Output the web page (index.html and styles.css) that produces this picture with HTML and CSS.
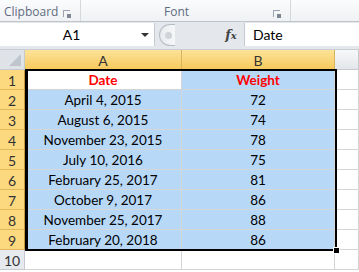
FILE: index.html
```html
<!DOCTYPE html>
<html lang="en">
<head>
    <meta charset="UTF-8">
    <title>Sheet</title>
    <link rel="stylesheet" href="styles.css">
</head>
<body>
    <div class="ribbon">
        <div class="group group-clip">
            <span class="group-label">Clipboard</span>
            <span class="launcher"></span>
        </div>
        <div class="group group-font">
            <span class="group-label">Font</span>
            <span class="launcher"></span>
        </div>
        <div class="group group-rest"></div>
    </div>

    <div class="formula-bar">
        <div class="name-box">
            <span class="name-text">A1</span>
            <span class="name-arrow"></span>
        </div>
        <div class="divider">
            <span class="grip"></span>
        </div>
        <div class="fx">f<span class="fx-x">x</span></div>
        <div class="formula-input">Date</div>
    </div>

    <div class="sheet">
        <div class="grid">
            <div class="corner"><span class="corner-tri"></span></div>
            <div class="col-head sel">A</div>
            <div class="col-head sel">B</div>
            <div class="col-head"></div>

            <div class="row-head sel">1</div>
            <div class="cell head-cell active">Date</div>
            <div class="cell head-cell hl">Weight</div>
            <div class="cell"></div>

            <div class="row-head sel">2</div>
            <div class="cell hl">April 4, 2015</div>
            <div class="cell hl">72</div>
            <div class="cell"></div>

            <div class="row-head sel">3</div>
            <div class="cell hl">August 6, 2015</div>
            <div class="cell hl">74</div>
            <div class="cell"></div>

            <div class="row-head sel">4</div>
            <div class="cell hl">November 23, 2015</div>
            <div class="cell hl">78</div>
            <div class="cell"></div>

            <div class="row-head sel">5</div>
            <div class="cell hl">July 10, 2016</div>
            <div class="cell hl">75</div>
            <div class="cell"></div>

            <div class="row-head sel">6</div>
            <div class="cell hl">February 25, 2017</div>
            <div class="cell hl">81</div>
            <div class="cell"></div>

            <div class="row-head sel">7</div>
            <div class="cell hl">October 9, 2017</div>
            <div class="cell hl">86</div>
            <div class="cell"></div>

            <div class="row-head sel">8</div>
            <div class="cell hl">November 25, 2017</div>
            <div class="cell hl">88</div>
            <div class="cell"></div>

            <div class="row-head sel">9</div>
            <div class="cell hl">February 20, 2018</div>
            <div class="cell hl">86</div>
            <div class="cell"></div>

            <div class="row-head">10</div>
            <div class="cell"></div>
            <div class="cell"></div>
            <div class="cell"></div>
        </div>
        <div class="selection">
            <span class="fill-handle"></span>
        </div>
    </div>
</body>
</html>
```

FILE: styles.css
```css
* {
    margin: 0;
    padding: 0;
    box-sizing: border-box;
}

body {
    width: 359px;
    height: 272px;
    overflow: hidden;
    background: #ffffff;
    font-family: 'Lato', 'Liberation Sans', sans-serif;
    color: #000;
}

/* ribbon strip */
.ribbon {
    height: 22px;
    display: flex;
    background: linear-gradient(#fbfcfd, #eff1f4);
    border-bottom: 1px solid #bfc4cb;
}

.group {
    position: relative;
    height: 21px;
    border-right: 1px solid #d5d9de;
}

.group-clip {
    width: 81px;
}

.group-font {
    width: 210px;
}

.group-rest {
    flex: 1;
    border-right: none;
}

.group-label {
    display: block;
    font-family: 'Open Sans', sans-serif;
    font-size: 12px;
    line-height: 23px;
    color: #5e6b7f;
}

.group-clip .group-label {
    padding-left: 4px;
}

.group-font .group-label {
    padding-left: 83px;
}

.launcher {
    position: absolute;
    right: 10px;
    top: 10px;
    width: 7px;
    height: 7px;
    border-top: 1px solid #9aa3ae;
    border-left: 1px solid #9aa3ae;
}

.launcher::after {
    content: '';
    position: absolute;
    right: -1px;
    bottom: -1px;
    width: 4px;
    height: 4px;
    background: #7d8693;
}

/* formula bar */
.formula-bar {
    height: 28px;
    display: flex;
    background: #e4e8ed;
    border-bottom: 1px solid #c8cdd3;
    padding: 1px 0 3px;
}

.name-box {
    width: 155px;
    background: #fff;
    display: flex;
    align-items: center;
    border-right: 1px solid #c5cad1;
}

.name-text {
    flex: 1;
    text-align: center;
    font-size: 14px;
    padding-left: 2px;
}

.name-arrow {
    width: 0;
    height: 0;
    margin-right: 5px;
    border-left: 4px solid transparent;
    border-right: 4px solid transparent;
    border-top: 4px solid #333;
}

.divider {
    width: 65px;
    display: flex;
    align-items: center;
    padding-left: 4px;
}

.grip {
    width: 16px;
    height: 22px;
    border-radius: 11px 0 0 11px;
    border: 1px solid #b7bdc5;
    border-right: none;
    background: linear-gradient(90deg, #e9ecef, #f6f7f9);
    position: relative;
}

.grip::after {
    content: '';
    position: absolute;
    left: 5px;
    top: 7px;
    width: 7px;
    height: 7px;
    border-radius: 50%;
    background: #d0d4d9;
}

.fx {
    width: 22px;
    font-family: 'DejaVu Serif', serif;
    font-style: italic;
    font-weight: bold;
    font-size: 13px;
    line-height: 24px;
    color: #444;
    text-align: center;
}

.fx-x {
    font-size: 10px;
}

.formula-input {
    flex: 1;
    background: #fff;
    margin-left: 2px;
    border-left: 1px solid #c5cad1;
    font-size: 14px;
    line-height: 24px;
    padding-left: 8px;
}

/* worksheet */
.sheet {
    position: relative;
}

.grid {
    display: grid;
    grid-template-columns: 25px 157px 153px 1fr;
    grid-template-rows: 20px repeat(10, 20px);
    background: #fff;
}

.corner {
    background: #dfe3e8;
    border-right: 1px solid #c5cad1;
    border-bottom: 1px solid #c5cad1;
    position: relative;
}

.corner-tri {
    position: absolute;
    right: 3px;
    bottom: 3px;
    width: 0;
    height: 0;
    border-left: 12px solid transparent;
    border-bottom: 12px solid #bfc5cd;
}

.col-head {
    background: linear-gradient(#fde9b0 0%, #f7f8fa 0%, #e3e6ea 100%);
    border-right: 1px solid #c5cad1;
    border-bottom: 1px solid #c5cad1;
    text-align: center;
    font-size: 14px;
    line-height: 19px;
    padding-top: 1px;
    color: #333;
}

.col-head.sel {
    background: linear-gradient(#fde39a, #f6c95c);
    border-right-color: #d8b45e;
    border-bottom: 1px solid #c29a3c;
}

.row-head {
    background: #e6e9ed;
    border-right: 1px solid #c5cad1;
    border-bottom: 1px solid #c5cad1;
    text-align: center;
    font-size: 14px;
    line-height: 19px;
    padding-top: 1px;
    color: #333;
}

.row-head.sel {
    background: #fcd97f;
    border-right: 1px solid #c29a3c;
    border-bottom-color: #e3b85a;
}

.cell {
    border-right: 1px solid #d4d4d4;
    border-bottom: 1px solid #d4d4d4;
    text-align: center;
    font-size: 13.5px;
    line-height: 19px;
    padding-top: 1px;
}

.cell.hl {
    background: #b8d8f8;
    border-right-color: #d6d6d6;
    border-bottom-color: #d6d6d6;
}

.cell.active {
    background: #fff;
}

.head-cell {
    color: #ff0000;
    font-weight: bold;
}

/* selection outline drawn over A1:B9 */
.selection {
    position: absolute;
    left: 25px;
    top: 19px;
    width: 312px;
    height: 182px;
    border: 2px solid #000;
    pointer-events: none;
}

.selection::before {
    content: '';
    position: absolute;
    left: 0;
    top: 0;
    right: 0;
    bottom: 0;
    border-left: 1px solid #000;
}

.fill-handle {
    position: absolute;
    right: -5px;
    bottom: -5px;
    width: 7px;
    height: 7px;
    background: #000;
    border: 1px solid #fff;
}
```
